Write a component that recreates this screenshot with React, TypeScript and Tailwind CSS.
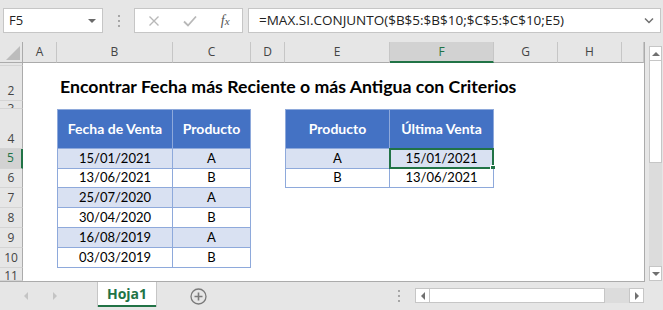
import React from "react";

type ColDef = { k: string; w: string };
const COLS: ColDef[] = [
  { k: "A", w: "w-[34px]" },
  { k: "B", w: "w-[116px]" },
  { k: "C", w: "w-[78px]" },
  { k: "D", w: "w-[34px]" },
  { k: "E", w: "w-[105px]" },
  { k: "F", w: "w-[104px]" },
  { k: "G", w: "w-[64px]" },
  { k: "H", w: "w-[64px]" },
  { k: "I", w: "w-[22px]" },
];

type RowDef = {
  n: string;
  h: string;
  title?: boolean;
  left?: [string, string];
  right?: [string, string];
  head?: boolean;
  band?: boolean;
  sel?: boolean;
  labelCls?: string;
};

const ROWS: RowDef[] = [
  { n: "1", h: "h-[3px]", labelCls: "items-start pt-0" },
  { n: "2", h: "h-[35px]", title: true, labelCls: "items-end pb-[1px]" },
  { n: "3", h: "h-[8px]", labelCls: "items-start pt-0" },
  {
    n: "4",
    h: "h-[40px]",
    head: true,
    left: ["Fecha de Venta", "Producto"],
    right: ["Producto", "Última Venta"],
    labelCls: "items-end pb-[1px]",
  },
  { n: "5", h: "h-[20px]", band: true, sel: true, left: ["15/01/2021", "A"], right: ["A", "15/01/2021"] },
  { n: "6", h: "h-[20px]", left: ["13/06/2021", "B"], right: ["B", "13/06/2021"] },
  { n: "7", h: "h-[20px]", band: true, left: ["25/07/2020", "A"] },
  { n: "8", h: "h-[20px]", left: ["30/04/2020", "B"] },
  { n: "9", h: "h-[20px]", band: true, left: ["16/08/2019", "A"] },
  { n: "10", h: "h-[20px]", left: ["03/03/2019", "B"] },
  { n: "11", h: "h-[13px]", labelCls: "items-start pt-0" },
];

const UI = { fontFamily: '"Open Sans", "Noto Sans", sans-serif' };
const CELLFONT = { fontFamily: 'Lato, "Noto Sans", sans-serif' };

function TableCell({
  w,
  text,
  first,
  row,
  selected,
}: {
  w: string;
  text: string;
  first: boolean;
  row: RowDef;
  selected?: boolean;
}) {
  const base = "shrink-0 h-full flex items-center justify-center border-r border-b border-[#8ea9db] relative";
  const l = first ? " border-l" : "";
  const t = row.head ? " border-t" : "";
  const bg = row.head
    ? " bg-[#4472c4] text-white font-bold text-[14px]"
    : row.band
    ? " bg-[#d9e1f2] text-black text-[13px]"
    : " bg-white text-black text-[13px]";
  return (
    <div className={`${w} ${base}${l}${t}${bg}`} style={CELLFONT}>
      <span className="whitespace-nowrap leading-none">{text}</span>
      {selected && (
        <div className="absolute -left-[1px] -top-[1px] -right-[1px] -bottom-[1px] border-2 border-[#217346]">
          <div className="absolute -right-[4px] -bottom-[4px] w-[6px] h-[6px] bg-[#217346] border border-white" />
        </div>
      )}
    </div>
  );
}

function BodyRow({ row }: { row: RowDef }) {
  const isSelRow = !!row.sel;
  return (
    <div className={`flex ${row.h} overflow-visible relative ${row.title ? "z-10" : ""}`}>
      <div
        className={`w-[23px] shrink-0 h-full overflow-hidden flex justify-center border-b border-[#d4d4d4] text-[12px] leading-[16px] ${
          isSelRow
            ? "bg-[#d2d2d2] border-r-2 border-r-[#217346] text-[#217346]"
            : "bg-[#e6e6e6] border-r border-r-[#ababab] text-[#444]"
        } ${row.labelCls ?? "items-center"}`}
        style={UI}
      >
        {row.n}
      </div>
      {COLS.map((c) => {
        if (row.title && c.k === "B") {
          return (
            <div key={c.k} className={`${c.w} shrink-0 h-full relative z-10 bg-white`}>
              <div
                className="absolute left-[3px] bottom-[5px] whitespace-nowrap text-[17.7px] font-bold text-black leading-none"
                style={CELLFONT}
              >
                Encontrar Fecha más Reciente o más Antigua con Criterios
              </div>
            </div>
          );
        }
        if (row.left && (c.k === "B" || c.k === "C")) {
          return (
            <TableCell
              key={c.k}
              w={c.w}
              text={c.k === "B" ? row.left[0] : row.left[1]}
              first={c.k === "B"}
              row={row}
            />
          );
        }
        if (row.right && (c.k === "E" || c.k === "F")) {
          return (
            <TableCell
              key={c.k}
              w={c.w}
              text={c.k === "E" ? row.right[0] : row.right[1]}
              first={c.k === "E"}
              row={row}
              selected={row.sel && c.k === "F"}
            />
          );
        }
        return <div key={c.k} className={`${c.w} shrink-0 h-full bg-white`} />;
      })}
    </div>
  );
}

function Tri({ dir, cls }: { dir: "up" | "down" | "left" | "right"; cls?: string }) {
  const pts =
    dir === "up"
      ? "0,5 4,1 8,5"
      : dir === "down"
      ? "0,1 8,1 4,5"
      : dir === "left"
      ? "5,0 5,8 1,4"
      : "1,0 1,8 5,4";
  const vb = dir === "up" || dir === "down" ? "0 0 8 6" : "0 0 6 8";
  const size = dir === "up" || dir === "down" ? { w: 8, h: 6 } : { w: 6, h: 8 };
  return (
    <svg width={size.w} height={size.h} viewBox={vb} className={cls}>
      <polygon points={pts} fill="currentColor" />
    </svg>
  );
}

function Dots({ cls }: { cls?: string }) {
  return (
    <div className={`flex flex-col gap-[3px] ${cls ?? ""}`}>
      <div className="w-[2px] h-[2px] bg-[#a6a6a6]" />
      <div className="w-[2px] h-[2px] bg-[#a6a6a6]" />
      <div className="w-[2px] h-[2px] bg-[#a6a6a6]" />
    </div>
  );
}

export default function App() {
  return (
    <div className="w-[663px] h-[310px] bg-[#e6e6e6] overflow-hidden flex flex-col select-none">
      {/* Formula bar */}
      <div className="h-[42px] shrink-0 flex pt-[8px]" style={UI}>
        <div className="ml-[3px] w-[100px] h-[25px] bg-white border border-[#c6c6c6] flex items-center pl-[5px] pr-[6px]">
          <span className="text-[13px] text-[#222] flex-1">F5</span>
          <Tri dir="down" cls="text-[#6a6a6a]" />
        </div>
        <div className="w-[31px] h-[25px] flex items-center justify-center">
          <Dots />
        </div>
        <div className="w-[109px] h-[25px] bg-white border border-[#c6c6c6] flex items-center">
          <div className="w-[38px] flex justify-center">
            <svg width="12" height="12" viewBox="0 0 12 12">
              <path d="M1.5 1.5 L10.5 10.5 M10.5 1.5 L1.5 10.5" stroke="#b8b8b8" strokeWidth="1.4" fill="none" />
            </svg>
          </div>
          <div className="w-[36px] flex justify-center">
            <svg width="14" height="12" viewBox="0 0 14 12">
              <path d="M1 6.5 L5 10.5 L13 1.5" stroke="#b8b8b8" strokeWidth="1.8" fill="none" />
            </svg>
          </div>
          <div className="w-[34px] flex justify-center">
            <span
              className="text-[14px] italic text-[#555] leading-none"
              style={{ fontFamily: '"Liberation Serif", serif' }}
            >
              f<span className="text-[11px]">x</span>
            </span>
          </div>
        </div>
        <div className="ml-[5px] mr-[2px] flex-1 h-[25px] bg-white border border-[#c6c6c6] flex items-center pl-[10px] pr-[6px]">
          <span className="flex-1 text-[13.5px] text-[#222] whitespace-nowrap">
            =MAX.SI.CONJUNTO($B$5:$B$10;$C$5:$C$10;E5)
          </span>
          <svg width="10" height="7" viewBox="0 0 10 7">
            <path d="M1 1.5 L5 5.5 L9 1.5" stroke="#707070" strokeWidth="1.5" fill="none" />
          </svg>
        </div>
      </div>

      {/* Grid + vertical scrollbar */}
      <div className="h-[240px] shrink-0 flex">
        <div className="w-[644px] shrink-0 flex flex-col overflow-hidden border-b border-[#ababab]">
          {/* column headers */}
          <div className="h-[21px] shrink-0 flex" style={UI}>
            <div className="w-[23px] shrink-0 h-full bg-[#e6e6e6] border-r border-b border-[#ababab] relative">
              <svg width="14" height="14" viewBox="0 0 14 14" className="absolute right-[2px] bottom-[2px]">
                <polygon points="14,0 14,14 0,14" fill="#bcbcbc" />
              </svg>
            </div>
            {COLS.map((c) =>
              c.k === "F" ? (
                <div
                  key={c.k}
                  className={`${c.w} shrink-0 h-full bg-[#d2d2d2] border-r border-[#c6c6c6] border-b-2 border-b-[#217346] flex items-center justify-center text-[12px] text-[#217346]`}
                >
                  {c.k}
                </div>
              ) : (
                <div
                  key={c.k}
                  className={`${c.w} shrink-0 h-full bg-[#e6e6e6] border-r border-[#c6c6c6] border-b border-b-[#ababab] flex items-center justify-center text-[12px] text-[#444]`}
                >
                  {c.k === "I" ? "" : c.k}
                </div>
              )
            )}
          </div>
          {ROWS.map((r) => (
            <BodyRow key={r.n} row={r} />
          ))}
        </div>
        {/* vertical scrollbar */}
        <div className="w-[19px] shrink-0 flex flex-col pt-[4px] pl-[4px] pr-[1px] pb-[1px] border-l border-[#ababab]">
          <div className="h-[15px] shrink-0 bg-white border border-[#c6c6c6] flex items-center justify-center">
            <Tri dir="up" cls="text-[#707070]" />
          </div>
          <div className="h-[102px] shrink-0 bg-white border border-[#c6c6c6] border-t-0" />
          <div className="flex-1 bg-[#dcdcdc]" />
          <div className="h-[15px] shrink-0 bg-white border border-[#c6c6c6] flex items-center justify-center">
            <Tri dir="down" cls="text-[#707070]" />
          </div>
        </div>
      </div>

      {/* sheet tabs bar */}
      <div className="h-[28px] shrink-0 flex items-start" style={UI}>
        <div className="w-[97px] h-[28px] flex items-center pl-[23px] gap-[23px]">
          <Tri dir="left" cls="text-[#c4c4c4]" />
          <Tri dir="right" cls="text-[#c4c4c4]" />
        </div>
        <div className="w-[60px] h-[25px] bg-white border-l border-r border-[#c6c6c6] flex flex-col">
          <div className="flex-1 flex items-center justify-center text-[14px] font-bold text-[#217346]">Hoja1</div>
          <div className="h-[2px] bg-[#217346]" />
        </div>
        <div className="w-[82px] h-[28px] flex items-center justify-center">
          <svg width="17" height="17" viewBox="0 0 17 17">
            <circle cx="8.5" cy="8.5" r="7.5" stroke="#7a7a7a" strokeWidth="1.3" fill="none" />
            <path d="M8.5 4.5 V12.5 M4.5 8.5 H12.5" stroke="#7a7a7a" strokeWidth="1.6" />
          </svg>
        </div>
        <div className="w-[176px] h-[28px] flex items-center justify-end pr-[15px]">
          <Dots />
        </div>
        <div className="flex mt-[6px] h-[15px] w-[229px]">
          <div className="w-[15px] h-full bg-white border border-[#c6c6c6] flex items-center justify-center">
            <Tri dir="left" cls="text-[#707070]" />
          </div>
          <div className="w-[175px] h-full bg-white border-t border-b border-r border-[#c6c6c6]" />
          <div className="flex-1 h-full bg-[#dcdcdc]" />
          <div className="w-[15px] h-full bg-white border border-[#c6c6c6] flex items-center justify-center">
            <Tri dir="right" cls="text-[#707070]" />
          </div>
        </div>
      </div>
    </div>
  );
}
